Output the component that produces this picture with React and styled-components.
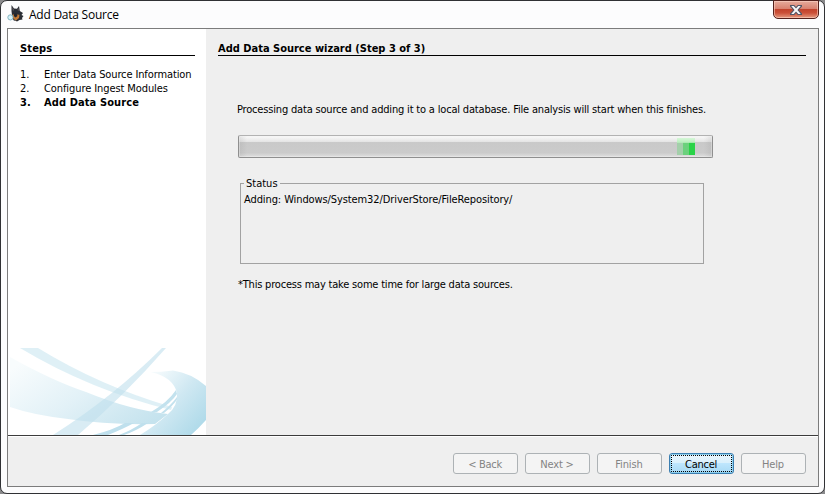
import React from "react";
import styled, { createGlobalStyle, css } from "styled-components";

const Global = createGlobalStyle`
  * { box-sizing: border-box; }
  html, body, #root { margin: 0; height: 100%; }
  body { background: #8a8a8c; overflow: hidden; }
`;

const Window = styled.div`
  width: 825px;
  height: 494px;
  display: flex;
  flex-direction: column;
  padding: 0 5px 6px 6px;
  border: 1px solid #303134;
  border-radius: 7px;
  background: #fcfcfd;
  color: #000;
  font: 11px/14px "DejaVu Sans Condensed", "DejaVu Sans", sans-serif;
  font-stretch: condensed;
`;

const TitleBar = styled.header`
  display: flex;
  flex: 0 0 27px;
  align-items: flex-start;
`;

const AppIcon = styled.svg`
  width: 17px;
  height: 17px;
  margin-top: 4px;
`;

const Title = styled.h1`
  flex: 1;
  margin: 5px 0 0 5px;
  font: 400 12px/17px "Open Sans", "Noto Sans", sans-serif;
  letter-spacing: ${(p) => p.$tracking}px;
`;

const CloseButton = styled.button`
  width: 46px;
  height: 19px;
  margin-top: -1px;
  padding: 0;
  display: flex;
  align-items: center;
  justify-content: center;
  border: 1px solid #54211c;
  border-radius: 0 0 5px 5px;
  background: linear-gradient(#e6ab9c 0, #d98270 45%, #c2432c 50%, #cb5038 70%, #e59a80 100%);
  box-shadow: inset 0 0 0 1px rgba(255, 215, 200, 0.55);
`;

const Client = styled.main`
  flex: 1;
  display: flex;
  flex-direction: column;
  border: 1px solid #7c7c7c;
  background: #efefef;
`;

const Body = styled.div`
  display: flex;
  flex: 0 0 406px;
`;

const Sidebar = styled.aside`
  width: 198px;
  display: flex;
  flex-direction: column;
  background: #fff;
`;

const Heading = styled.h2`
  height: 15px;
  margin: 12px ${(p) => p.$right}px 0 12px;
  border-bottom: 1px solid #000;
  font-size: 11px;
  line-height: 16px;
  font-weight: 700;
  white-space: nowrap;
  letter-spacing: ${(p) => p.$tracking || 0}px;
`;

const StepList = styled.ol`
  flex: 1;
  margin: 12px 0 0 12px;
  padding: 0;
  list-style: none;
`;

const Step = styled.li`
  display: flex;
  height: 14px;
  white-space: nowrap;
  letter-spacing: ${(p) => p.$tracking}px;
  font-weight: ${(p) => (p.$current ? 700 : 400)};
`;

const StepNumber = styled.span`
  width: 24px;
  letter-spacing: 0;
`;

const Swoosh = styled.svg`
  display: block;
  width: 198px;
  height: 87px;
`;

const Content = styled.section`
  flex: 1;
  display: flex;
  flex-direction: column;
`;

const Text = styled.p`
  margin: ${(p) => p.$margin};
  height: 14px;
  white-space: nowrap;
  letter-spacing: ${(p) => p.$tracking}px;
`;

const ProgressTrack = styled.div`
  width: 475px;
  height: 23px;
  margin: 18px 0 0 32px;
  padding: 2px 17px 2px 0;
  display: flex;
  justify-content: flex-end;
  border: 1px solid #8f8f8f;
  border-top-color: #b2b2b2;
  border-radius: 2px;
  background:
    linear-gradient(90deg, rgba(150, 150, 150, 0.22), transparent 8px, transparent 465px, rgba(150, 150, 150, 0.22)),
    linear-gradient(#fafafa 0, #e4e4e4 28%, #c9c9c9 31%, #cbcbcb 80%, #e0e0e0 100%);
  box-shadow: inset 0 0 0 1px rgba(240, 240, 240, 0.4);
`;

const Chunk = styled.i`
  width: 6px;
  height: 17px;
  background: linear-gradient(#d6f6d8 0, #b8efbc 26%, ${(p) => p.$color} 29%, ${(p) => p.$color} 100%);
`;

const StatusBox = styled.fieldset`
  width: 464px;
  height: 88px;
  margin: 18px 0 0 34px;
  padding: 3px 3px 0;
  border: 1px solid #a2a2a2;
`;

const Legend = styled.legend`
  padding: 0 2px;
  height: 14px;
  line-height: 15px;
  letter-spacing: ${(p) => p.$tracking}px;
`;

const Footer = styled.footer`
  flex: 1;
  display: flex;
  justify-content: flex-end;
  gap: 7px;
  padding: 17px 12px 0 0;
  border-top: 1px solid #3c3c3c;
  box-shadow: inset 0 1px #fff;
`;

const Button = styled.button`
  width: 65px;
  height: 21px;
  padding: 2px 1px 0 0;
  border: 1px solid #adb2b5;
  border-radius: 3px;
  background: #f4f4f4;
  color: #838383;
  font: inherit;
  font-stretch: condensed;
  letter-spacing: ${(p) => p.$tracking || 0}px;
  ${(p) =>
    p.$focused &&
    css`
      border-color: #3c7fb1;
      color: #000;
      background: linear-gradient(#eaf6fd 0, #d9f0fc 48%, #bee6fd 50%, #a7d9f5 100%);
      box-shadow: inset 0 0 0 1px #8fd0ee;
      outline: 1px dotted #000;
      outline-offset: -3px;
    `}
`;

const DogIcon = () => (
  <AppIcon viewBox="0 0 17 17">
    <path d="M4.500 0L7 3.500l3 .3L12 1l.8 5L16 8l-1.500 2 2 1-1.500 2 .5 1.500-3 .5-2.500 1.500-4-2-1-4.500-.5-4z" fill="#292d35" />
    <path d="M5.300 2l1.500 2.500-.8 2zM11.500 3l.3 3-1.300-1z" fill="#6d6364" />
    <path d="M5.500 9l2 1 2-.5 3 .2-.5 3.300-3 2.500-2.500-1.500z" fill="#c57a35" />
    <path d="M7.500 8.500h2l1 2.500-2 1.500-1.700-1.500z" fill="#22252b" />
    <circle cx="3.400" cy="12.400" r="2.600" fill="#d4f1f8" stroke="#86b4c1" />
    <path d="M6 14.500l2 1" stroke="#535c66" />
  </AppIcon>
);

const SwooshArt = () => (
  <Swoosh viewBox="0 0 198 87">
    <defs>
      <linearGradient id="wing" x1="0" y1=".2" x2="1" y2=".8">
        <stop stopColor="#f8fcfd" />
        <stop offset=".5" stopColor="#e2f1f7" />
        <stop offset="1" stopColor="#c5e3ee" />
      </linearGradient>
      <linearGradient id="arc" gradientUnits="userSpaceOnUse" x1="145" y1="28" x2="196" y2="72">
        <stop stopColor="#f4fafc" />
        <stop offset=".5" stopColor="#cfe8f2" />
        <stop offset="1" stopColor="#b1dbea" />
      </linearGradient>
    </defs>
    <path d="M2 9Q45 33 78 44Q122 62 160 66L147 76Q98 77 60 71Q25 67 2 59Z" fill="url(#wing)" />
    <path d="M12 0H30Q92 38 164 59L163 62Q82 42 12 0Z" fill="#d9edf5" fillOpacity=".85" />
    <path d="M154 0H158Q116 48 70 87H45Q105 49 154 0Z" fill="#c0e0ed" fillOpacity=".6" />
    <path d="M168 42Q160 54 143 64H149Q164 54 169 46ZM169 49Q163 57 153 65H156Q165 58 170 50ZM170 54Q166 61 161 66H164Q168 61 170 54Z" fill="#c3e2ee" />
    <path d="M85 87Q105 82 117 75H126Q115 81 100 87ZM111 87Q124 82 134 75H140Q128 83 116 87Z" fill="#bfe0ed" />
    <path d="M143 24Q153 24 165 22.500Q183 25 198 38V72Q190 81 183 87H132Q147 78 160 66Q170 58 169 45Q165 29 143 24Z" fill="url(#arc)" />
  </Swoosh>
);

const steps = [
  { label: "Enter Data Source Information", tracking: -0.12 },
  { label: "Configure Ingest Modules", tracking: -0.09 },
  { label: "Add Data Source", tracking: 0.1, current: true },
];

const buttons = [
  { label: "< Back", tracking: -0.3 },
  { label: "Next >", tracking: -0.2 },
  { label: "Finish", tracking: -0.1 },
  { label: "Cancel", tracking: -0.25, focused: true },
  { label: "Help", tracking: -0.2 },
];

export default function App() {
  return (
    <>
      <Global />
      <Window>
        <TitleBar>
          <DogIcon />
          <Title $tracking={-0.25}>Add Data Source</Title>
          <CloseButton aria-label="Close">
            <svg width="14" height="12" viewBox="0 0 14 12">
              <path d="M1 1h4.200L7 3l1.800-2H13v1.500L9.800 6l3.200 3.500V11H8.800L7 9l-1.800 2H1V9.500L4.200 6 1 2.500z" fill="#535666" />
              <path d="M2.200 2h2.500L7 4.600 9.300 2h2.500L8.400 6l3.400 4H9.300L7 7.400 4.700 10H2.200l3.400-4z" fill="#f7f7f8" />
            </svg>
          </CloseButton>
        </TitleBar>
        <Client>
          <Body>
            <Sidebar>
              <Heading $right={11} $tracking={0.15}>Steps</Heading>
              <StepList>
                {steps.map((s, i) => (
                  <Step key={s.label} $tracking={s.tracking} $current={s.current}>
                    <StepNumber>{i + 1}.</StepNumber>
                    {s.label}
                  </Step>
                ))}
              </StepList>
              <SwooshArt />
            </Sidebar>
            <Content>
              <Heading $right={12}>Add Data Source wizard (Step 3 of 3)</Heading>
              <Text $margin="47px 0 0 31px" $tracking={-0.18}>
                Processing data source and adding it to a local database. File analysis will start when this finishes.
              </Text>
              <ProgressTrack>
                <Chunk $color="#a3cfaa" />
                <Chunk $color="#6bd17c" />
                <Chunk $color="#29d347" />
              </ProgressTrack>
              <StatusBox>
                <Legend $tracking={0}>Status</Legend>
                <Text $margin="0" $tracking={-0.1}>Adding: Windows/System32/DriverStore/FileRepository/</Text>
              </StatusBox>
              <Text $margin="14px 0 0 32px" $tracking={-0.2}>
                *This process may take some time for large data sources.
              </Text>
            </Content>
          </Body>
          <Footer>
            {buttons.map((b) => (
              <Button key={b.label} $focused={b.focused} $tracking={b.tracking}>{b.label}</Button>
            ))}
          </Footer>
        </Client>
      </Window>
    </>
  );
}
